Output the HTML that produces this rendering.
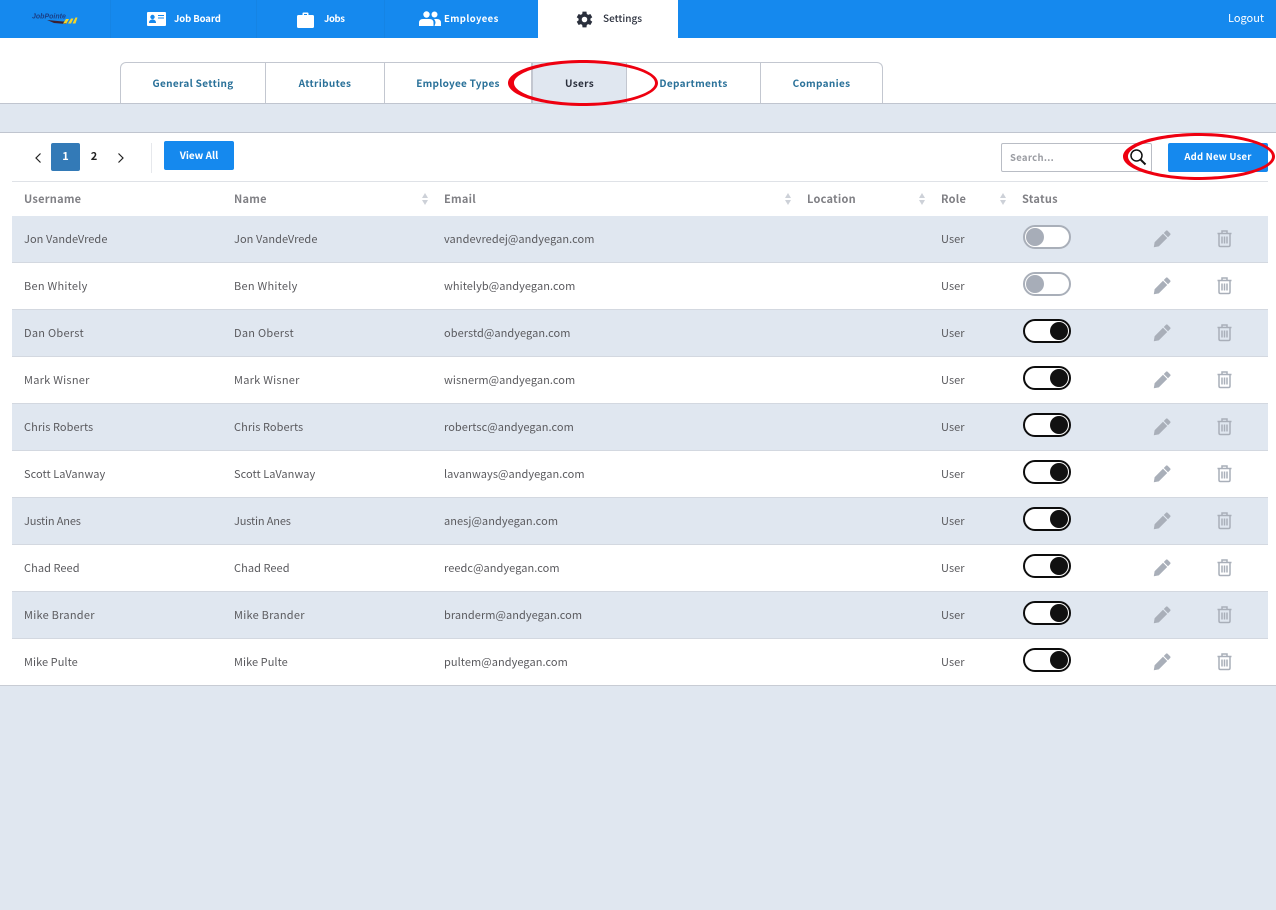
<!DOCTYPE html>
<html><head><meta charset="utf-8"><title>Users</title>
<style>
*{box-sizing:border-box}
html,body{margin:0;padding:0}
body{width:1276px;height:910px;background:#e0e7f0;position:relative;overflow:hidden;font-family:"Noto Sans CJK JP","Liberation Sans",sans-serif;color:#555}
.a{position:absolute;white-space:nowrap}
.top{left:0;top:0;width:1276px;height:38px;background:#1589ee}
.nav{top:0;height:38px;line-height:36px;font-size:9.500px;font-weight:700;color:#fff}
.sep{top:0;width:1px;height:38px;background:#1584e4}
.sub{left:0;top:38px;width:1276px;height:66px;background:#fff;border-bottom:1px solid #c0c5cf}
.tab{top:62px;height:41px;background:#fff;border:1px solid #c3c7d0;border-bottom:0;border-left:0;line-height:40px;text-align:center;font-size:10px;font-weight:700;color:#2a7199;letter-spacing:.33px}
.main{left:0;top:132px;width:1276px;height:554px;background:#fff;border-top:1px solid #c0c5cf;border-bottom:1px solid #c8ccd4}
.row{left:12px;width:1256px;height:47px;border-bottom:1px solid #d3d8e0}
.s{background:#e0e7f0}
.t{font-size:11px;line-height:16px;color:#5a5a5e;letter-spacing:.06px}
.w{letter-spacing:.26px}
.x{letter-spacing:-.15px}
.h{font-size:11px;line-height:16px;top:191px;color:#808085;font-weight:700;letter-spacing:.25px}
.tog{left:1023px;width:48px;height:24px;border-radius:12px;background:#fff}
.off{border:2px solid #a9afb9}
.off i{position:absolute;left:1px;top:1px;width:18px;height:18px;border-radius:50%;background:#a7adb8}
.on{border:2px solid #0d0d0d}
.on i{position:absolute;right:1px;top:1px;width:18px;height:18px;border-radius:50%;background:#111}
.sort{width:6px;height:12px;top:193px}
</style></head><body>
<div class="a top"></div>
<div class="a sep" style="left:110px"></div>
<div class="a sep" style="left:256px"></div>
<div class="a sep" style="left:384px"></div>
<svg class="a" style="left:30px;top:11px" width="48" height="14" viewBox="0 0 48 14"><text x="2" y="7.500" font-size="7" font-weight="700" font-style="italic" fill="#1a3f86" font-family="Liberation Sans">JobPointe</text><path d="M17 9L33 10.500L38 10L36 13L24 12Z" fill="#3b2030"/><path d="M33 12.500L36 8H39L36.500 12.500ZM38 12.500L41 7.500H43.500L41 12.500ZM42.500 12.500L45.500 6.500H47.500L45.500 12.500Z" fill="#f3d52a"/></svg>
<svg class="a" style="left:147px;top:12px" width="19" height="14" viewBox="0 0 19 14"><rect width="19" height="14" rx="1" fill="#fff"/><circle cx="5.500" cy="5" r="2.200" fill="#1589ee"/><path d="M2 11c0-2.500 1.500-3.500 3.500-3.500S9 8.500 9 11z" fill="#1589ee"/><path d="M11 3.500h6M11 6h6" stroke="#1589ee"/></svg>
<div class="a nav" style="left:174px;letter-spacing:-.1px">Job Board</div>
<svg class="a" style="left:297px;top:12px" width="17" height="16" viewBox="0 0 17 16"><path d="M5.500 3V1.500Q5.500.5 6.500.5h4q1 0 1 1V3H15.500q1.500 0 1.500 1.500V14.500Q17 16 15.500 16h-14Q0 16 0 14.500V4.500Q0 3 1.500 3zM7 3h3V2H7z" fill="#fff"/></svg>
<div class="a nav" style="left:324px;letter-spacing:-.4px">Jobs</div>
<svg class="a" style="left:419px;top:11px" width="22" height="16" viewBox="0 0 22 16"><circle cx="7.500" cy="3.500" r="3.200" fill="#fff"/><circle cx="15.500" cy="3.500" r="3" fill="#fff"/><path d="M0 15v-3q0-4 4-4h6.500q4 0 4 4v3z" fill="#fff"/><path d="M15.500 15h6.500v-3q0-4-4-4h-3q1.500 1.500 1.500 4z" fill="#fff"/></svg>
<div class="a nav" style="left:444px;letter-spacing:.4px">Employees</div>
<div class="a" style="left:538px;top:0;width:140px;height:38px;background:#fff"></div>
<svg class="a" style="left:575px;top:10px" width="19" height="19" viewBox="0 0 24 24"><path fill="#2a2f3c" d="M19.400 13c.1-.3.100-.7.100-1s0-.7-.1-1l2.400-1.800-2.400-4.200-2.800 1.100a8 8 0 0 0-1.700-1L14.500 2h-5l-.4 3.100a8 8 0 0 0-1.700 1L4.600 5 2.200 9.200 4.600 11c-.1.300-.1.700-.1 1s0 .7.100 1l-2.400 1.800L4.600 19l2.800-1.100a8 8 0 0 0 1.700 1l.4 3.100h5l.4-3.100a8 8 0 0 0 1.700-1l2.800 1.100 2.400-4.200zM12 15.500a3.500 3.500 0 1 1 0-7 3.500 3.500 0 0 1 0 7z"/></svg>
<div class="a nav" style="left:603px;color:#2a2f3c;font-weight:500;font-size:10px">Settings</div>
<div class="a nav" style="left:1228px;font-size:11px;font-weight:400">Logout</div>

<div class="a sub"></div>
<div class="a tab" style="left:120px;width:146px;border-left:1px solid #c3c7d0;border-top-left-radius:6px">General Setting</div>
<div class="a tab" style="left:266px;width:119px">Attributes</div>
<div class="a tab" style="left:385px;width:147px;letter-spacing:.25px">Employee Types</div>
<div class="a tab" style="left:532px;width:95px;background:#e0e7f0;color:#2a2f3c;border-left:1px solid #c3c7d0">Users</div>
<div class="a tab" style="left:627px;width:134px">Departments</div>
<div class="a tab" style="left:761px;width:122px;border-top-right-radius:6px">Companies</div>

<div class="a main"></div>
<svg class="a" style="left:33px;top:152px" width="10" height="12" viewBox="0 0 10 12"><path d="M7.500 1.500L3 6l4.500 4.500" fill="none" stroke="#222" stroke-width="1.200"/></svg>
<div class="a" style="left:51px;top:143px;width:29px;height:28px;background:#337ab7;border-radius:2px;color:#fff;text-align:center;line-height:27px;font-size:11px;font-weight:700">1</div>
<div class="a" style="left:80px;top:143px;width:28px;height:28px;color:#222;text-align:center;line-height:27px;font-size:11px;font-weight:700">2</div>
<svg class="a" style="left:116px;top:152px" width="10" height="12" viewBox="0 0 10 12"><path d="M2.500 1.500L7 6l-4.500 4.500" fill="none" stroke="#222" stroke-width="1.200"/></svg>
<div class="a" style="left:151px;top:143px;width:1px;height:30px;background:#e6e8ec"></div>
<div class="a" style="left:164px;top:141px;width:70px;height:29px;background:#1589ee;border-radius:2px;color:#fff;text-align:center;line-height:28px;font-size:10px;font-weight:700">View All</div>
<div class="a" style="left:1001px;top:143px;width:151px;height:29px;border:1px solid #b9bdc5;border-radius:2px;background:#fff;font-size:9.500px;font-weight:700;line-height:26px;padding-left:8px;color:#9a9ca2;letter-spacing:.3px">Search...</div>
<svg class="a" style="left:1129px;top:148px" width="18" height="18" viewBox="0 0 18 18"><circle cx="7.500" cy="7.500" r="5.500" fill="none" stroke="#111" stroke-width="1.500"/><path d="M11.500 11.500L16.500 16.500" stroke="#111" stroke-width="2"/></svg>
<div class="a" style="left:1168px;top:143px;width:100px;height:29px;background:#1589ee;border-radius:2px;color:#fff;text-align:center;line-height:27px;font-size:9.500px;font-weight:700;letter-spacing:.2px">Add New User</div>
<div class="a" style="left:12px;top:181px;width:1256px;height:1px;background:#dfe2e7"></div>

<div class="a h" style="left:24px">Username</div><div class="a h" style="left:234px">Name</div><div class="a h" style="left:444px">Email</div><div class="a h" style="left:807px">Location</div><div class="a h" style="left:941px">Role</div><div class="a h" style="left:1022px">Status</div>
<svg class="a sort" style="left:422px" viewBox="0 0 6 12"><path d="M3 0l3 5H0zM3 12L0 7h6z" fill="#cdd1d8"/></svg>
<svg class="a sort" style="left:785px" viewBox="0 0 6 12"><path d="M3 0l3 5H0zM3 12L0 7h6z" fill="#cdd1d8"/></svg>
<svg class="a sort" style="left:919px" viewBox="0 0 6 12"><path d="M3 0l3 5H0zM3 12L0 7h6z" fill="#cdd1d8"/></svg>
<svg class="a sort" style="left:1000px" viewBox="0 0 6 12"><path d="M3 0l3 5H0zM3 12L0 7h6z" fill="#cdd1d8"/></svg>

<svg width="0" height="0" style="position:absolute"><defs>
<g id="pen"><path d="M13 .8q.8-.8 1.600 0l2.600 2.600q.8.8 0 1.600L15 7.200 10.800 3zM10 3.800l4.200 4.200-8.400 8.400L.8 17.200l.8-5z" fill="#a9afb9"/></g>
<g id="bin"><path d="M5 3V1h5v2M.5 3.500h14M2 3.500V15q0 1.500 1.500 1.500h8Q13 16.500 13 15V3.500M5 6.500v7M7.500 6.500v7M10 6.500v7" fill="none" stroke="#a9afb9" stroke-width="1.500"/></g>
</defs></svg>

<div class="a row s" style="top:216px"></div>
<div class="a t" style="left:24px;top:231px">Jon VandeVrede</div><div class="a t" style="left:234px;top:231px">Jon VandeVrede</div><div class="a t" style="left:444px;top:231px">vandevredej@andyegan.com</div><div class="a t" style="left:941px;top:231px">User</div>
<div class="a tog off" style="top:225px"><i></i></div>
<svg class="a" style="left:1153px;top:230px" width="18" height="18"><use href="#pen"/></svg><svg class="a" style="left:1217px;top:230px" width="15" height="18"><use href="#bin"/></svg>

<div class="a row" style="top:263px"></div>
<div class="a t w" style="left:24px;top:278px">Ben Whitely</div><div class="a t w" style="left:234px;top:278px">Ben Whitely</div><div class="a t" style="left:444px;top:278px">whitelyb@andyegan.com</div><div class="a t" style="left:941px;top:278px">User</div>
<div class="a tog off" style="top:272px"><i></i></div>
<svg class="a" style="left:1153px;top:277px" width="18" height="18"><use href="#pen"/></svg><svg class="a" style="left:1217px;top:277px" width="15" height="18"><use href="#bin"/></svg>

<div class="a row s" style="top:310px"></div>
<div class="a t w" style="left:24px;top:325px">Dan Oberst</div><div class="a t w" style="left:234px;top:325px">Dan Oberst</div><div class="a t" style="left:444px;top:325px">oberstd@andyegan.com</div><div class="a t" style="left:941px;top:325px">User</div>
<div class="a tog on" style="top:319px"><i></i></div>
<svg class="a" style="left:1153px;top:324px" width="18" height="18"><use href="#pen"/></svg><svg class="a" style="left:1217px;top:324px" width="15" height="18"><use href="#bin"/></svg>

<div class="a row" style="top:357px"></div>
<div class="a t w" style="left:24px;top:372px">Mark Wisner</div><div class="a t w" style="left:234px;top:372px">Mark Wisner</div><div class="a t" style="left:444px;top:372px">wisnerm@andyegan.com</div><div class="a t" style="left:941px;top:372px">User</div>
<div class="a tog on" style="top:366px"><i></i></div>
<svg class="a" style="left:1153px;top:371px" width="18" height="18"><use href="#pen"/></svg><svg class="a" style="left:1217px;top:371px" width="15" height="18"><use href="#bin"/></svg>

<div class="a row s" style="top:404px"></div>
<div class="a t" style="left:24px;top:419px">Chris Roberts</div><div class="a t" style="left:234px;top:419px">Chris Roberts</div><div class="a t" style="left:444px;top:419px">robertsc@andyegan.com</div><div class="a t" style="left:941px;top:419px">User</div>
<div class="a tog on" style="top:413px"><i></i></div>
<svg class="a" style="left:1153px;top:418px" width="18" height="18"><use href="#pen"/></svg><svg class="a" style="left:1217px;top:418px" width="15" height="18"><use href="#bin"/></svg>

<div class="a row" style="top:451px"></div>
<div class="a t" style="left:24px;top:466px">Scott LaVanway</div><div class="a t" style="left:234px;top:466px">Scott LaVanway</div><div class="a t" style="left:444px;top:466px">lavanways@andyegan.com</div><div class="a t" style="left:941px;top:466px">User</div>
<div class="a tog on" style="top:460px"><i></i></div>
<svg class="a" style="left:1153px;top:465px" width="18" height="18"><use href="#pen"/></svg><svg class="a" style="left:1217px;top:465px" width="15" height="18"><use href="#bin"/></svg>

<div class="a row s" style="top:498px"></div>
<div class="a t x" style="left:24px;top:513px">Justin Anes</div><div class="a t x" style="left:234px;top:513px">Justin Anes</div><div class="a t" style="left:444px;top:513px">anesj@andyegan.com</div><div class="a t" style="left:941px;top:513px">User</div>
<div class="a tog on" style="top:507px"><i></i></div>
<svg class="a" style="left:1153px;top:512px" width="18" height="18"><use href="#pen"/></svg><svg class="a" style="left:1217px;top:512px" width="15" height="18"><use href="#bin"/></svg>

<div class="a row" style="top:545px"></div>
<div class="a t" style="left:24px;top:560px">Chad Reed</div><div class="a t" style="left:234px;top:560px">Chad Reed</div><div class="a t" style="left:444px;top:560px">reedc@andyegan.com</div><div class="a t" style="left:941px;top:560px">User</div>
<div class="a tog on" style="top:554px"><i></i></div>
<svg class="a" style="left:1153px;top:559px" width="18" height="18"><use href="#pen"/></svg><svg class="a" style="left:1217px;top:559px" width="15" height="18"><use href="#bin"/></svg>

<div class="a row s" style="top:592px"></div>
<div class="a t w" style="left:24px;top:607px">Mike Brander</div><div class="a t w" style="left:234px;top:607px">Mike Brander</div><div class="a t" style="left:444px;top:607px">branderm@andyegan.com</div><div class="a t" style="left:941px;top:607px">User</div>
<div class="a tog on" style="top:601px"><i></i></div>
<svg class="a" style="left:1153px;top:606px" width="18" height="18"><use href="#pen"/></svg><svg class="a" style="left:1217px;top:606px" width="15" height="18"><use href="#bin"/></svg>

<div class="a row" style="top:639px;border-bottom:0"></div>
<div class="a t" style="left:24px;top:654px">Mike Pulte</div><div class="a t" style="left:234px;top:654px">Mike Pulte</div><div class="a t" style="left:444px;top:654px">pultem@andyegan.com</div><div class="a t" style="left:941px;top:654px">User</div>
<div class="a tog on" style="top:648px"><i></i></div>
<svg class="a" style="left:1153px;top:653px" width="18" height="18"><use href="#pen"/></svg><svg class="a" style="left:1217px;top:653px" width="15" height="18"><use href="#bin"/></svg>

<svg class="a" style="left:0;top:0;pointer-events:none" width="1276" height="190" viewBox="0 0 1276 190">
<path fill-rule="evenodd" fill="#ee0010" d="M583 60c41 0 75 10.300 75 23s-34 23-75 23-75-10.300-75-23 34-23 75-23zm0 3c-38 0-69 9-69 20s31 20 69 20 72-9 72-20-34-20-72-20z"/>
<path fill-rule="evenodd" fill="#ee0010" d="M1199 133c42 0 76 10.500 76 23.500s-34 23.500-76 23.500-76-10.500-76-23.500 34-23.500 76-23.500zm0 3c-38 0-71 9.200-71 20.500s33 20.500 71 20.500 73-9.200 73-20.500-35-20.500-73-20.500z"/>
</svg>
</body></html>
